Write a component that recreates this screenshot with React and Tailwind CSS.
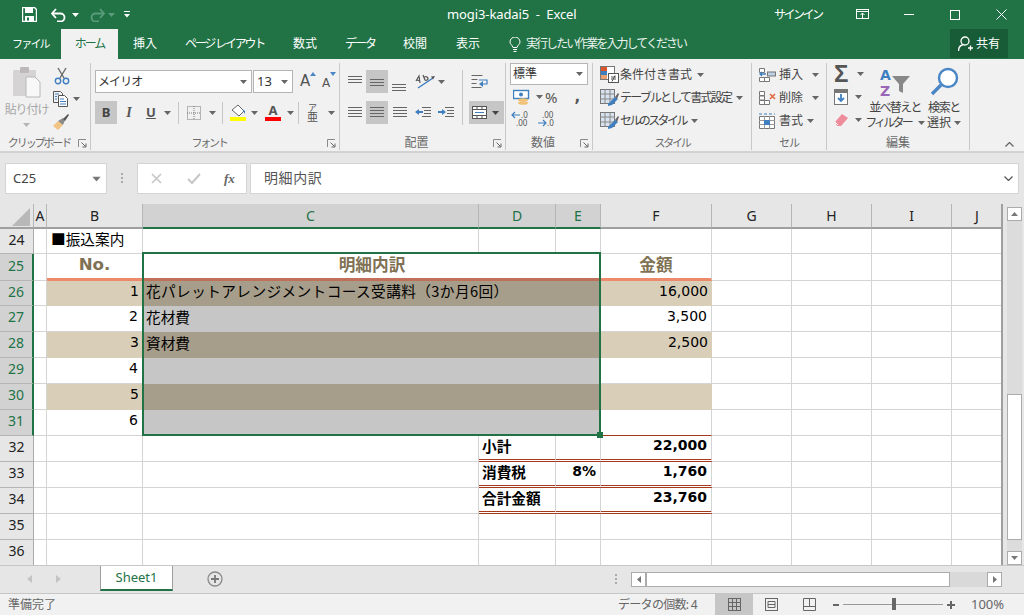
import React from "react";

const Caret = ({ c = "#666", className = "" }) => (
  <svg width="7" height="4" viewBox="0 0 7 4" className={"shrink-0 " + className}><path d="M0 0h7L3.5 4z" fill={c} /></svg>
);
const Launcher = () => (
  <svg width="9" height="9" viewBox="0 0 9 9" className="shrink-0"><path d="M.5 8V.5H8" fill="none" stroke="#8a8a8a" /><path d="M3.5 3.5l4 4M8 4.5V8H4.5" fill="none" stroke="#666" /></svg>
);

function Group({ className, label, labelCls = "text-[12px]", launcher, children }) {
  return (
    <div className={"flex flex-col border-r border-[#c8c8c8] shrink-0 " + className}>
      <div className="h-[72px]">{children}</div>
      <div className="h-[15px] flex items-end relative pb-[1px]">
        <span className={"flex-1 text-center leading-[13px] text-[#6a6a6a] whitespace-nowrap " + labelCls}>{label}</span>
        {launcher && <span className="mr-[3px] mb-[1px] flex"><Launcher /></span>}
      </div>
    </div>
  );
}

const lines = (ys, x1, x2, c = "#666") => ys.map((y, i) => <path key={i} d={`M${x1} ${y}H${x2}`} stroke={c} />);
const AlignV = ({ y }) => <svg width="14" height="14" viewBox="0 0 14 14">{lines([y, y + 3, y + 6], 0, 14)}</svg>;
const AlignH = ({ a, b }) => <svg width="15" height="13" viewBox="0 0 15 13">{lines([1.5, 4.5, 7.5, 10.5], a, b)}</svg>;

const SmallLabel = ({ children, className = "" }) => <span className={"text-[12px] leading-[16px] text-[#444] whitespace-nowrap " + className}>{children}</span>;

const StyleRow = ({ icon, label, cls }) => (
  <div className="flex items-center h-[23px]">
    <span className="w-[20px] h-[18px] flex shrink-0">{icon}</span>
    <SmallLabel className={cls}>{label}</SmallLabel>
    <Caret className="ml-[5px]" />
  </div>
);

const TableIcon = () => (
  <svg width="20" height="18" viewBox="0 0 20 18">
    <rect x=".5" y=".5" width="14" height="14" fill="#d8e2ee" stroke="#777" />
    <path d="M5 .5v14M10 .5v14M.5 5h14M.5 10h14" stroke="#888" />
    <path d="M8 15l7-7 3 2-6 6-4 1z" fill="#3f7fbf" />
    <path d="M15 8l3-4 1 1-2 5z" fill="#666" />
  </svg>
);

function Ribbon() {
  return (
    <div className="h-[94px] bg-[#f1f1f1] border-b-[2px] border-[#d2d2d2] flex pt-[4px] pb-[1px] shrink-0">
      <Group className="w-[91px]" label="クリップボード" labelCls="text-[11px] tracking-[-2.1px]" launcher>
        <div className="flex">
          <div className="w-[53px] flex flex-col items-center pt-[4px]">
            <svg width="29" height="31" viewBox="0 0 29 31">
              <rect x="1" y="3" width="23" height="26" rx="1" fill="#d6d3d5" />
              <rect x="8" y="0" width="9" height="6" rx="1" fill="#bdb9bb" />
              <path d="M14 10h9l5 5v15H14z" fill="#f8f8f8" stroke="#b8b8b8" />
            </svg>
            <span className="text-[12px] leading-[14px] mt-[5px] text-[#a8a8a8] tracking-[-1.1px] whitespace-nowrap">貼り付け</span>
            <Caret c="#b5b5b5" className="mt-[6px]" />
          </div>
          <div className="flex flex-col pt-[4px] gap-[6px]">
            <svg width="16" height="18" viewBox="0 0 16 18" className="ml-[1px]">
              <path d="M4 1l6 10M12 1L6 11" stroke="#6a6a6a" strokeWidth="1.4" fill="none" />
              <circle cx="4" cy="14" r="2.7" fill="none" stroke="#3f7fbf" strokeWidth="1.4" />
              <circle cx="12" cy="14" r="2.7" fill="none" stroke="#3f7fbf" strokeWidth="1.4" />
            </svg>
            <div className="flex items-center">
              <svg width="16" height="16" viewBox="0 0 16 16">
                <path d="M.5.5h7l2 2V4M.5.5v11H5" fill="none" stroke="#555" />
                <path d="M5.500 4.500h6l3 3v8h-9z" fill="#fff" stroke="#555" />
                <path d="M2 3h4M2 5.500h2M2 8h2M7 8h4M7 10.500h6M7 13h6" stroke="#3f7fbf" />
              </svg>
              <Caret className="ml-[4px]" />
            </div>
            <svg width="17" height="17" viewBox="0 0 17 17">
              <path d="M0 13l5-5 5 4-5 5z" fill="#f1c486" />
              <path d="M5 8l5-3 2 2-2 5z" fill="#8a8a8a" />
              <path d="M10 6l5-5 1 1-4 6z" fill="#555" />
            </svg>
          </div>
        </div>
      </Group>

      <Group className="w-[249px]" label="フォント" labelCls="text-[11px] tracking-[-2.2px]" launcher>
        <div className="pl-[4px] pt-[7px]">
          <div className="flex items-center h-[23px]">
            <div className="w-[157px] h-[23px] bg-white border border-[#b5b5b5] flex items-center pl-[2px] pr-[4px] justify-between">
              <span className="text-[12px] text-[#333] tracking-[-0.9px]">メイリオ</span><Caret />
            </div>
            <div className="w-[40px] h-[23px] bg-white border border-[#b5b5b5] flex items-center pl-[3px] pr-[4px] justify-between ml-[1px]">
              <span className="text-[13px] text-[#333]">13</span><Caret />
            </div>
            <span className="ml-[7px] w-[21px] text-[15px] text-[#555] font-['DejaVu_Sans',sans-serif] relative leading-none">A<svg width="6" height="4" viewBox="0 0 6 4" className="absolute left-[10px] -top-[2px]"><path d="M3 0l3 4H0z" fill="#4a86c5" /></svg></span>
            <span className="ml-[1px] text-[12px] text-[#555] font-['DejaVu_Sans',sans-serif] relative leading-none mt-[2px]">A<svg width="6" height="4" viewBox="0 0 6 4" className="absolute left-[8px] -top-[5px]"><path d="M0 0h6L3 4z" fill="#4a86c5" /></svg></span>
          </div>
          <div className="flex items-center h-[23px] mt-[8px]">
            <span className="w-[22px] h-[23px] bg-[#c6c6c6] flex items-center justify-center text-[13px] font-bold text-[#444]">B</span>
            <span className="w-[22px] text-center text-[14px] italic font-bold font-['Liberation_Serif',serif] text-[#555] ml-[1px]">I</span>
            <span className="w-[20px] text-center text-[13px] font-bold text-[#555] underline ml-[1px]">U</span>
            <Caret className="ml-[3px]" />
            <span className="w-px h-[22px] bg-[#c6c6c6] ml-[7px]" />
            <svg width="14" height="14" viewBox="0 0 14 14" className="ml-[8px]"><rect x=".5" y=".5" width="13" height="13" fill="none" stroke="#777" strokeDasharray="1 1" /><path d="M7 0v14M0 7h14" stroke="#777" strokeDasharray="1 1" /></svg>
            <Caret className="ml-[8px]" />
            <span className="w-px h-[22px] bg-[#c6c6c6] ml-[6px]" />
            <div className="ml-[7px] w-[16px] flex flex-col items-center">
              <svg width="16" height="13" viewBox="0 0 16 13"><path d="M2 6l6-5 6 6-5 5z" fill="#fff" stroke="#666" /><path d="M12 5l3 2v3z" fill="#3f7fbf" /></svg>
              <span className="w-[16px] h-[4px] bg-[#ffff00]" />
            </div>
            <Caret className="ml-[5px]" />
            <div className="ml-[7px] w-[16px] flex flex-col items-center leading-none">
              <span className="text-[13px] h-[13px] font-bold text-[#555] leading-[13px]">A</span>
              <span className="w-[16px] h-[4px] bg-[#ff0000]" />
            </div>
            <Caret className="ml-[6px]" />
            <span className="w-px h-[22px] bg-[#c6c6c6] ml-[4px]" />
            <svg width="12" height="19" viewBox="0 0 12 19" className="ml-[8px] shrink-0">
              <text x="1" y="8" fontSize="9" fill="#555" fontFamily="Noto Sans CJK JP">ア</text>
              <text x="0" y="18" fontSize="11" fill="#555" fontFamily="Noto Sans CJK JP">亜</text>
            </svg>
            <Caret className="ml-[9px]" />
          </div>
        </div>
      </Group>

      <Group className="w-[166px]" label="配置" launcher>
        <div className="flex pl-[8px] pt-[7px]">
          <div className="w-[113px]">
            <div className="flex items-center h-[23px]">
              <span className="w-[18px] flex"><AlignV y={1.5} /></span>
              <span className="w-[22px] h-[23px] bg-[#c6c6c6] flex items-center justify-center"><AlignV y={4.5} /></span>
              <span className="w-[22px] flex justify-center pt-[6px]"><AlignV y={6.5} /></span>
              <svg width="21" height="17" viewBox="0 0 21 17" className="ml-[5px]"><path d="M1 8l3-5 1 7M2 7l3 1" fill="none" stroke="#555" strokeWidth="1.2" /><path d="M8 2l2 5a2 2 0 003-2l-1-1a2 2 0 00-3 1" fill="none" stroke="#555" strokeWidth="1.2" /><path d="M3 15L18 5" stroke="#3f7fbf" strokeWidth="1.5" /><path d="M20 3l-4 .5 2 3z" fill="#555" /></svg>
              <Caret className="ml-[2px]" />
            </div>
            <div className="flex items-center h-[23px] mt-[8px]">
              <span className="w-[18px] flex"><AlignH a={0} b={14} /></span>
              <span className="w-[22px] h-[23px] bg-[#c6c6c6] flex items-center justify-center"><AlignH a={0} b={14} /></span>
              <span className="w-[22px] flex justify-center"><AlignH a={1} b={15} /></span>
              <svg width="17" height="13" viewBox="0 0 17 13" className="ml-[5px]"><path d="M7 1.500h9M9 4.500h7M9 7.500h7M7 10.500h9" stroke="#666" /><path d="M0 6l4-3v2h4v2H4v2z" fill="#3f7fbf" /></svg>
              <svg width="17" height="13" viewBox="0 0 17 13" className="ml-[6px]"><path d="M7 1.500h9M9 4.500h7M9 7.500h7M7 10.500h9" stroke="#666" /><path d="M8 6L4 3v2H0v2h4v2z" fill="#3f7fbf" /></svg>
            </div>
          </div>
          <div className="border-l border-[#c6c6c6] h-[55px] pl-[6px] ml-[1px]">
            <div className="h-[23px] flex items-center pl-[2px]">
              <svg width="18" height="16" viewBox="0 0 18 16"><path d="M.5 1.500h11M.5 5.500h6M.5 9.500h5M.5 13.500h10" stroke="#666" /><path d="M8 6h8v4h-6" fill="none" stroke="#3f7fbf" strokeWidth="1.2" /><path d="M12 7l-4 3 4 3z" fill="#3f7fbf" /></svg>
            </div>
            <div className="w-[35px] h-[23px] bg-[#c6c6c6] flex items-center pl-[3px] mt-[8px]">
              <svg width="15" height="13" viewBox="0 0 15 13"><rect x=".5" y=".5" width="14" height="12" fill="#fff" stroke="#555" /><path d="M0 3.500h15M0 9.500h15M5 0v3M10 0v3M5 10v3M10 10v3" stroke="#555" /><path d="M3 6.500h9" stroke="#3f7fbf" /></svg>
              <Caret c="#444" className="ml-[5px]" />
            </div>
          </div>
        </div>
      </Group>

      <Group className="w-[87px]" label="数値" launcher>
        <div className="pl-[4px]">
          <div className="w-[78px] h-[22px] bg-white border border-[#b5b5b5] flex items-center justify-between pl-[2px] pr-[4px]">
            <span className="text-[12px] text-[#333]">標準</span><Caret />
          </div>
          <div className="flex items-center h-[20px] mt-[2px] pl-[3px]">
            <svg width="17" height="17" viewBox="0 0 17 17" className="shrink-0"><rect x=".5" y="1.500" width="15" height="8" fill="#fff" stroke="#3f7fbf" strokeWidth="1.4" /><circle cx="8" cy="5.500" r="2" fill="#3f7fbf" /><ellipse cx="10" cy="11" rx="5" ry="1.800" fill="#f0c27a" /><ellipse cx="10" cy="14" rx="5" ry="1.800" fill="#f0c27a" /></svg>
            <Caret className="ml-[6px]" />
            <span className="ml-[2px] text-[15px] leading-none text-[#555]">%</span>
            <span className="ml-[17px] text-[15px] leading-none font-bold text-[#555] font-['DejaVu_Sans',sans-serif]">,</span>
          </div>
          <div className="flex items-center h-[20px] mt-[1px] pl-[1px] gap-[6px]">
            <svg width="20" height="17" viewBox="0 0 20 17" className="shrink-0">
              <path d="M1 5h8M4 2L1 5l3 3" fill="none" stroke="#3f7fbf" strokeWidth="1.2" />
              <text x="10" y="8" fontSize="8" fill="#555" fontFamily="Noto Sans">.0</text>
              <text x="5" y="16" fontSize="8" fill="#555" fontFamily="Noto Sans">.00</text>
            </svg>
            <svg width="20" height="17" viewBox="0 0 20 17" className="shrink-0">
              <text x="5" y="8" fontSize="8" fill="#555" fontFamily="Noto Sans">.00</text>
              <path d="M1 13h8M6 10l3 3-3 3" fill="none" stroke="#3f7fbf" strokeWidth="1.2" />
              <text x="10" y="16" fontSize="8" fill="#555" fontFamily="Noto Sans">.0</text>
            </svg>
          </div>
        </div>
      </Group>

      <Group className="w-[159px]" label="スタイル" labelCls="text-[11px] tracking-[-2.200px]">
        <div className="pl-[7px] flex flex-col">
          <StyleRow label="条件付き書式" cls="" icon={
            <svg width="20" height="18" viewBox="0 0 20 18"><rect x=".5" y=".5" width="14" height="13" fill="#fff" stroke="#777" /><rect x="1" y="1" width="6" height="4" fill="#d9552b" /><rect x="1" y="5" width="6" height="4" fill="#3f7fbf" /><rect x="1" y="9" width="6" height="4" fill="#e9a06f" /><rect x="8.500" y="7.500" width="10" height="9" fill="#fff" stroke="#555" /><path d="M11 11h5M11 13h5M15 9.500l-3 6" stroke="#555" /></svg>
          } />
          <StyleRow label="テーブルとして書式設定" cls="tracking-[-1.800px]" icon={<TableIcon />} />
          <StyleRow label="セルのスタイル" cls="tracking-[-2.600px]" icon={<TableIcon />} />
        </div>
      </Group>

      <Group className="w-[75px]" label="セル" labelCls="text-[11px] tracking-[-1px]">
        <div className="pl-[7px] flex flex-col">
          {[
            ["挿入", <svg key="a" width="17" height="16" viewBox="0 0 17 16"><path d="M.5 1.500h5v4h-5zM.5 10.500h5v4h-5zM5.500 10.500h5v4h-5z" fill="#fff" stroke="#777" /><rect x="8.500" y="5" width="8" height="4" fill="#bcd0e6" stroke="#777" /><path d="M1 7h6M3 5L1 7l2 2" stroke="#3f7fbf" fill="none" strokeWidth="1.3" /></svg>],
            ["削除", <svg key="b" width="17" height="16" viewBox="0 0 17 16"><path d="M.5 1.500h5v4h-5zM.5 10.500h5v4h-5zM5.500 10.500h5v4h-5zM.5 6h5v4h-5z" fill="#fff" stroke="#777" /><path d="M11 4l5 5M16 4l-5 5" stroke="#e0683c" strokeWidth="1.500" /></svg>],
            ["書式", <svg key="c" width="17" height="16" viewBox="0 0 17 16"><path d="M.5 3.500h15v12H.5z" fill="#fff" stroke="#777" /><path d="M5.500 3v13M10.500 3v13M0 7.500h16M0 11.500h16" stroke="#999" /><rect x="5" y="7" width="6" height="5" fill="#3f7fbf" /><path d="M0 1h16" stroke="#3f7fbf" strokeDasharray="3 2" /></svg>],
          ].map(([t, ic], i) => (
            <div key={t} className="flex items-center h-[23px]">
              {ic}
              <SmallLabel className="ml-[3px]">{t}</SmallLabel>
              <Caret className={i === 2 ? "ml-[4px]" : "ml-[9px]"} />
            </div>
          ))}
        </div>
      </Group>

      <Group className="w-[143px]" label="編集">
        <div className="flex pl-[7px]">
          <div className="w-[38px] flex flex-col">
            <div className="flex items-center h-[22px]"><span className="w-[16px] text-[24px] leading-none font-bold text-[#555] font-['Liberation_Sans',sans-serif]">Σ</span><Caret className="ml-[7px]" /></div>
            <div className="flex items-center h-[24px]">
              <svg width="15" height="16" viewBox="0 0 15 16"><rect x=".5" y=".5" width="13" height="15" fill="#fff" stroke="#777" /><rect x="1" y="1" width="12" height="3" fill="#777" /><path d="M7 5v7M4 9l3 3 3-3" stroke="#3f7fbf" strokeWidth="1.800" fill="none" /></svg>
              <Caret className="ml-[6px]" />
            </div>
            <div className="flex items-center h-[22px]">
              <svg width="15" height="14" viewBox="0 0 15 14"><path d="M1 9l7-8 6 4-7 8H3z" fill="#ee8c9c" /><path d="M1 9l3 3" stroke="#fff" /></svg>
              <Caret className="ml-[6px]" />
            </div>
          </div>
          <div className="flex flex-col items-center w-[48px] shrink-0">
            <svg width="31" height="30" viewBox="0 0 31 30" className="mt-[4px] shrink-0">
              <text x="0" y="13" fontSize="14" fontWeight="700" fill="#3f7fbf" fontFamily="DejaVu Sans">A</text>
              <text x="0" y="29" fontSize="14" fontWeight="700" fill="#9a66b8" fontFamily="DejaVu Sans">Z</text>
              <path d="M12 9h18l-7 8v9l-4-2v-7z" fill="#888" />
            </svg>
            <span className="text-[12px] leading-[15px] mt-[3px] text-[#444] whitespace-nowrap tracking-[-1.700px]">並べ替えと</span>
            <span className="flex items-center text-[12px] leading-[15px] text-[#444] whitespace-nowrap tracking-[-2.800px]">フィルター<Caret className="ml-[7px]" /></span>
          </div>
          <div className="flex flex-col items-center w-[50px] shrink-0">
            <svg width="29" height="29" viewBox="0 0 29 29" className="mt-[4px] shrink-0">
              <circle cx="18" cy="11" r="9" fill="#fff" stroke="#4a86c5" strokeWidth="2.400" />
              <path d="M11 18L2 27" stroke="#4a86c5" strokeWidth="3.400" />
            </svg>
            <span className="text-[12px] leading-[15px] mt-[4px] text-[#444] whitespace-nowrap tracking-[-1.300px]">検索と</span>
            <span className="flex items-center text-[12px] leading-[15px] text-[#444] whitespace-nowrap">選択<Caret className="ml-[3px]" /></span>
          </div>
        </div>
      </Group>

      <div className="flex-1 flex items-end justify-end pr-[10px] pb-[3px]">
        <svg width="9" height="5" viewBox="0 0 9 5"><path d="M.5 4.500l4-4 4 4" fill="none" stroke="#666" strokeWidth="1.300" /></svg>
      </div>
    </div>
  );
}

function TitleBar() {
  return (
    <div className="h-[29px] bg-[#217346] flex items-center relative text-white shrink-0">
      <svg width="15" height="15" viewBox="0 0 15 15" className="ml-[22px] shrink-0"><path d="M.5.5h12l2 2v12H.5z" fill="none" stroke="#fff" strokeWidth="1.400" /><rect x="3" y="1" width="8" height="5" fill="#fff" /><rect x="3" y="9" width="9" height="5.500" fill="#fff" /><rect x="5" y="10.500" width="2" height="3" fill="#217346" /></svg>
      <svg width="15" height="14" viewBox="0 0 15 14" className="ml-[14px] shrink-0"><path d="M1 5.500h8.500a4 4 0 010 8H6" fill="none" stroke="#fff" strokeWidth="1.800" /><path d="M5 1L1 5.500 5 10" fill="none" stroke="#fff" strokeWidth="1.800" /></svg>
      <Caret c="#fff" className="ml-[6px]" />
      <svg width="15" height="14" viewBox="0 0 15 14" className="ml-[11px] shrink-0"><path d="M14 5.500H5.500a4 4 0 000 8H9" fill="none" stroke="#5a9c7b" strokeWidth="1.800" /><path d="M10 1l4 4.500L10 10" fill="none" stroke="#5a9c7b" strokeWidth="1.800" /></svg>
      <Caret c="#5a9c7b" className="ml-[3px]" />
      <svg width="6" height="7" viewBox="0 0 6 7" className="ml-[9px] shrink-0"><path d="M0 .5h6" stroke="#fff" /><path d="M0 3h6L3 6.500z" fill="#fff" /></svg>
      <div className="ml-[317px] w-[129px] shrink-0 text-[13px] whitespace-pre leading-none tracking-[-0.1px]">mogi3-kadai5  -  Excel</div>
      <span className="ml-[198px] w-[46px] shrink-0 text-[12px] tracking-[-2.500px] whitespace-nowrap">サインイン</span>
      <svg width="13" height="11" viewBox="0 0 13 11" className="ml-[36px] shrink-0"><rect x=".5" y=".5" width="12" height="9" fill="none" stroke="#fff" /><path d="M0 2.500h13M6.500 9V4M4.500 6l2-2 2 2" stroke="#fff" fill="none" /></svg>
      <span className="w-[10px] h-px bg-white ml-[35px] shrink-0" />
      <span className="w-[10px] h-[10px] border border-white ml-[36px] shrink-0" />
      <svg width="11" height="11" viewBox="0 0 11 11" className="ml-[36px] shrink-0"><path d="M.5.5l10 10M10.500.5l-10 10" stroke="#fff" /></svg>
    </div>
  );
}

function Tabs() {
  return (
    <div className="h-[30px] bg-[#217346] flex items-center text-white text-[12px] shrink-0 whitespace-nowrap">
      <span className="ml-[12px] text-[11px] tracking-[-1.800px] w-[34px] shrink-0">ファイル</span>
      <span className="ml-[15px] w-[57px] shrink-0 h-[30px] bg-[#f1f1f1] text-[#217346] flex items-center justify-center tracking-[-2px]">ホーム</span>
      <span className="ml-[15px] w-[24px] shrink-0">挿入</span>
      <span className="ml-[28px] w-[80px] shrink-0 tracking-[-2.200px]">ページ レイアウト</span>
      <span className="ml-[28px] w-[24px] shrink-0">数式</span>
      <span className="ml-[28px] w-[30px] shrink-0 tracking-[-2px]">データ</span>
      <span className="ml-[28px] w-[24px] shrink-0">校閲</span>
      <span className="ml-[29px] w-[24px] shrink-0">表示</span>
      <svg width="12" height="15" viewBox="0 0 12 15" className="ml-[29px] shrink-0"><path d="M4 10.500C3.500 8 1 7.500 1 5a5 5 0 0110 0c0 2.500-2.500 3-3 5.500z" fill="none" stroke="#fff" /><path d="M4 12.500h4M4.500 14.500h3" stroke="#fff" /></svg>
      <span className="ml-[5px] tracking-[-1.950px] w-[161px] shrink-0 text-[#e9f2ed]">実行したい作業を入力してください</span>
      <div className="ml-[263px] w-[58px] shrink-0 h-[29px] mt-[-1px] bg-[#185c37] flex items-center pl-[8px] gap-[3px]">
        <svg width="15" height="16" viewBox="0 0 15 16"><circle cx="7" cy="5" r="4" fill="none" stroke="#fff" strokeWidth="1.300" /><path d="M.5 15c0-4 2.500-6 5-6.500M10 12h5M12.500 9.500v5" fill="none" stroke="#fff" strokeWidth="1.300" /></svg>
        <span className="text-[12px]">共有</span>
      </div>
    </div>
  );
}

function FormulaBar() {
  return (
    <div className="h-[51px] bg-[#e6e6e6] flex items-start pt-[10px] shrink-0">
      <div className="ml-[5px] w-[102px] h-[31px] bg-white border border-[#d4d4d4] flex items-center justify-between pl-[7px] pr-[6px]">
        <span className="text-[13px] text-[#444]">C25</span><Caret c="#777" className="scale-125" />
      </div>
      <div className="ml-[14px] mt-[7px] h-[16px] flex flex-col gap-[2px] justify-center"><span className="w-[2px] h-[2px] bg-[#aaa]" /><span className="w-[2px] h-[2px] bg-[#aaa]" /><span className="w-[2px] h-[2px] bg-[#aaa]" /></div>
      <div className="ml-[14px] w-[110px] h-[31px] bg-white border border-[#d4d4d4] flex items-center">
        <svg width="11" height="11" viewBox="0 0 11 11" className="ml-[13px]"><path d="M1 1l9 9M10 1l-9 9" stroke="#c6c6c6" strokeWidth="1.600" /></svg>
        <svg width="14" height="11" viewBox="0 0 14 11" className="ml-[25px]"><path d="M1 6l4 4 8-9" fill="none" stroke="#c6c6c6" strokeWidth="2" /></svg>
        <span className="ml-[23px] text-[13px] italic font-bold font-['Liberation_Serif',serif] text-[#666] leading-none">fx</span>
      </div>
      <div className="ml-[3px] w-[769px] h-[31px] bg-white border border-[#d4d4d4] flex items-center justify-between pl-[13px] pr-[5px]">
        <span className="text-[14px] text-[#555] tracking-[0.6px] pb-[3px]">明細内訳</span>
        <svg width="9" height="5" viewBox="0 0 9 5"><path d="M.5.5l4 4 4-4" fill="none" stroke="#555" strokeWidth="1.200" /></svg>
      </div>
    </div>
  );
}

const COLW = { A: "w-[13px]", B: "w-[96px]", C: "w-[336px]", D: "w-[77px]", E: "w-[45px]", F: "w-[111px]", G: "w-[80px]", H: "w-[80px]", I: "w-[80px]", J: "w-[51px]" };
const GRID = "border-r border-b border-[#d4d4d4]";
const JP = "font-['Noto_Sans_CJK_JP',sans-serif] text-[14.67px]";
const NUM = "font-['DejaVu_Sans',sans-serif] text-[14px]";

const Cell = ({ w, className = GRID, children }) => (
  <div className={`${w} shrink-0 h-full flex items-center whitespace-nowrap text-black ${className}`}>{children}</div>
);

function RowHead({ n, sel }) {
  return (
    <div className={`w-[34px] shrink-0 h-full flex items-center justify-center pb-[4px] text-[14px] border-b ${sel ? "bg-[#d2d2d2] text-[#217346] border-r-2 border-r-[#217346] border-b-[#b5b5b5]" : "bg-[#e6e6e6] text-[#222] border-r border-r-[#ababab] border-b-[#b5b5b5]"}`}>{n}</div>
  );
}

const Blank = () => (<><Cell w={COLW.G} /><Cell w={COLW.H} /><Cell w={COLW.I} /><Cell w={COLW.J} /></>);

function HeaderRow() {
  const H = ({ c, sel, w }) => (
    <div className={`${w} shrink-0 h-full flex items-center justify-center text-[14px] border-r border-r-[#b5b5b5] border-b-2 ${sel ? "bg-[#d2d2d2] text-[#217346] border-b-[#217346]" : "bg-[#e6e6e6] text-[#222] border-b-[#9f9f9f]"}`}>{c}</div>
  );
  return (
    <div className="flex h-[25px] w-[1003px]">
      <div className="w-[34px] shrink-0 bg-[#e6e6e6] border-b-2 border-b-[#9f9f9f] border-r border-r-[#b5b5b5] flex items-end justify-end pr-[3px] pb-[1px]">
        <svg width="18" height="18" viewBox="0 0 18 18"><path d="M18 0v18H0z" fill="#b8b8b8" /></svg>
      </div>
      <H c="A" w={COLW.A} />
      <H c="B" w={COLW.B} />
      <H c="C" w={COLW.C} sel />
      <H c="D" w={COLW.D} sel />
      <H c="E" w={COLW.E} sel />
      <H c="F" w={COLW.F} />
      <H c="G" w={COLW.G} />
      <H c="H" w={COLW.H} />
      <H c="I" w={COLW.I} />
      <H c="J" w={COLW.J} />
    </div>
  );
}

const SEL_W = "w-[458px]";
function DataRow({ n, no, text, amount, tan, wide, h = "h-[26px]" }) {
  const tanCls = "bg-[#d9cfb8]";
  const selCls = tan ? "bg-[#a69d8a]" : "bg-[#c6c6c6]";
  return (
    <div className={`flex shrink-0 ${h}`}>
      <RowHead n={n} sel />
      <Cell w={COLW.A} />
      <Cell w={COLW.B} className={`justify-end pr-[4px] pb-[5px] ${NUM} ${tan ? tanCls : GRID}`}>{no}</Cell>
      <Cell w={SEL_W} className={`pl-[3px] pb-[5px] ${JP} ${selCls} ${wide ? "tracking-[0.4px]" : ""}`}>{text}</Cell>
      <Cell w={COLW.F} className={`justify-end pr-[4px] pb-[5px] ${NUM} ${tan ? tanCls : (n === 31 ? "border-r border-r-[#d4d4d4] border-b border-b-[#a5391c]" : GRID)}`}>{amount}</Cell>
      <Blank />
    </div>
  );
}

function PlainRow({ n, h = "h-[26px]", children }) {
  return (
    <div className={`flex ${h}`}>
      <RowHead n={n} />
      <Cell w={COLW.A} />
      {children}
      <Blank />
    </div>
  );
}

const dbl = "border-r border-r-[#d4d4d4] border-b-[3px] border-double border-b-[#a5391c]";
const Bold = "font-['DejaVu_Sans',sans-serif] text-[14px] font-bold pb-[4px]";
const BoldJP = "font-['Noto_Sans_CJK_JP',sans-serif] text-[14.67px] font-bold pb-[4px]";
const HeadJP = "font-['Noto_Sans_CJK_JP',sans-serif] text-[16.67px] font-bold pb-[3px]";
const HeadNo = "font-['DejaVu_Sans',sans-serif] text-[16.67px] font-bold pb-[3px]";

function Sheet() {
  return (
    <div className="h-[361px] flex relative overflow-hidden bg-white shrink-0">
      <div className="w-[1001px] shrink-0 border-r-2 border-[#9f9f9f] overflow-hidden relative box-content">
        <HeaderRow />
        <PlainRow n={24} h="h-[25px]">
          <Cell w={COLW.B} className={`${GRID} pl-[4px] pb-[4px] ${JP}`}>■振込案内</Cell>
          <Cell w={COLW.C} /><Cell w={COLW.D} /><Cell w={COLW.E} /><Cell w={COLW.F} />
        </PlainRow>
        <div className="flex h-[27px]">
          <RowHead n={25} sel />
          <Cell w={COLW.A} />
          <Cell w={COLW.B} className={`justify-center border-r border-r-[#d4d4d4] border-b-[3px] border-b-[#ee8a6c] ${HeadNo}`}><span className="text-[#7f7254]">No.</span></Cell>
          <Cell w={SEL_W} className={`justify-center border-b-[3px] border-b-[#c06f59] ${HeadJP}`}><span className="text-[#7f7254]">明細内訳</span></Cell>
          <Cell w={COLW.F} className={`justify-center border-r border-r-[#d4d4d4] border-b-[3px] border-b-[#ee8a6c] ${HeadJP}`}><span className="text-[#7f7254]">金額</span></Cell>
          <Blank />
        </div>
        <DataRow n={26} no="1" tan wide h="h-[25px]" text="花パレットアレンジメントコース受講料（3か月6回）" amount="16,000" />
        <DataRow n={27} no="2" text="花材費" amount="3,500" />
        <DataRow n={28} no="3" tan text="資材費" amount="2,500" />
        <DataRow n={29} no="4" />
        <DataRow n={30} no="5" tan />
        <DataRow n={31} no="6" />
        <PlainRow n={32}>
          <Cell w={COLW.B} /><Cell w={COLW.C} />
          <Cell w={COLW.D} className={`${dbl} pl-[3px] ${BoldJP}`}>小計</Cell>
          <Cell w={COLW.E} className={dbl} />
          <Cell w={COLW.F} className={`${dbl} justify-end pr-[4px] ${Bold}`}>22,000</Cell>
        </PlainRow>
        <PlainRow n={33}>
          <Cell w={COLW.B} /><Cell w={COLW.C} />
          <Cell w={COLW.D} className={`${dbl} pl-[3px] ${BoldJP}`}>消費税</Cell>
          <Cell w={COLW.E} className={`${dbl} justify-end pr-[4px] ${Bold}`}>8%</Cell>
          <Cell w={COLW.F} className={`${dbl} justify-end pr-[4px] ${Bold}`}>1,760</Cell>
        </PlainRow>
        <PlainRow n={34}>
          <Cell w={COLW.B} /><Cell w={COLW.C} />
          <Cell w={COLW.D} className={`${dbl} pl-[3px] ${BoldJP}`}>合計金額</Cell>
          <Cell w={COLW.E} className={dbl} />
          <Cell w={COLW.F} className={`${dbl} justify-end pr-[4px] ${Bold}`}>23,760</Cell>
        </PlainRow>
        {[35, 36].map((n) => (
          <PlainRow key={n} n={n}>
            <Cell w={COLW.B} /><Cell w={COLW.C} /><Cell w={COLW.D} /><Cell w={COLW.E} /><Cell w={COLW.F} />
          </PlainRow>
        ))}
        <div className="absolute left-[142px] top-[48px] w-[459px] h-[184px] border-2 border-[#217346]">
          <div className="absolute -right-[4px] -bottom-[4px] w-[6px] h-[6px] bg-[#217346]" />
        </div>
      </div>
      <div className="flex-1 bg-[#e6e6e6] flex flex-col items-center pt-[3px] pl-[1px]">
        <div className="w-[15px] h-[14px] bg-white border border-[#ababab] flex items-center justify-center">
          <svg width="7" height="4" viewBox="0 0 7 4"><path d="M3.500 0L7 4H0z" fill="#777" /></svg>
        </div>
        <div className="w-[15px] flex-1 bg-[#dcdcdc] flex flex-col pt-[173px]">
          <div className="w-[15px] h-[146px] bg-white border border-[#ababab]" />
        </div>
        <div className="w-[15px] h-[14px] bg-white border border-[#ababab] flex items-center justify-center">
          <Caret c="#777" />
        </div>
      </div>
    </div>
  );
}

function SheetTabs() {
  return (
    <div className="h-[28px] bg-[#e6e6e6] border-t border-[#c6c6c6] flex shrink-0 items-start">
      <svg width="5" height="8" viewBox="0 0 5 8" className="ml-[27px] mt-[9px]"><path d="M5 0v8L0 4z" fill="#c4c4c4" /></svg>
      <svg width="5" height="8" viewBox="0 0 5 8" className="ml-[24px] mt-[9px]"><path d="M0 0v8l5-4z" fill="#c4c4c4" /></svg>
      <div className="ml-[39px] w-[73px] h-[25px] bg-white border-x border-[#9f9f9f] border-b-2 border-b-[#217346] flex items-center justify-center text-[13px] text-[#217346]">Sheet1</div>
      <svg width="16" height="16" viewBox="0 0 16 16" className="ml-[34px] mt-[5px]"><circle cx="8" cy="8" r="7" fill="none" stroke="#8a8a8a" strokeWidth="1.300" /><path d="M4 8h8M8 4v8" stroke="#777" strokeWidth="1.800" /></svg>
      <div className="ml-[392px] mt-[7px] h-[12px] flex flex-col gap-[2px] justify-center"><span className="w-[2px] h-[2px] bg-[#aaa]" /><span className="w-[2px] h-[2px] bg-[#aaa]" /><span className="w-[2px] h-[2px] bg-[#aaa]" /></div>
      <div className="ml-[14px] mt-[6px] w-[371px] h-[15px] flex bg-[#d9d9d9]">
        <div className="w-[15px] h-[15px] bg-white border border-[#ababab] flex items-center justify-center"><svg width="4" height="7" viewBox="0 0 4 7"><path d="M4 0v7L0 3.500z" fill="#777" /></svg></div>
        <div className="w-[304px] h-[15px] bg-white border border-[#ababab]" />
        <div className="flex-1" />
        <div className="w-[15px] h-[15px] bg-white border border-[#ababab] flex items-center justify-center"><svg width="4" height="7" viewBox="0 0 4 7"><path d="M0 0v7l4-3.500z" fill="#777" /></svg></div>
      </div>
    </div>
  );
}

function StatusBar() {
  return (
    <div className="h-[22px] bg-[#f1f1f1] border-t border-[#c6c6c6] flex items-center shrink-0 text-[12px] text-[#666] whitespace-nowrap">
      <span className="ml-[8px] w-[48px]">準備完了</span>
      <span className="ml-[562px] w-[80px] tracking-[-0.7px]">データの個数: 4</span>
      <div className="ml-[17px] w-[38px] h-[21px] bg-[#c6c6c6] flex items-center justify-center">
        <svg width="13" height="13" viewBox="0 0 13 13"><rect x=".5" y=".5" width="12" height="12" fill="none" stroke="#666" /><path d="M4.500 0v13M8.500 0v13M0 4.500h13M0 8.500h13" stroke="#666" /></svg>
      </div>
      <svg width="13" height="13" viewBox="0 0 13 13" className="ml-[12px]"><rect x=".5" y=".5" width="12" height="12" fill="none" stroke="#666" /><path d="M3 3.500h7v6H3zM3 6.500h7" fill="none" stroke="#666" /></svg>
      <svg width="13" height="13" viewBox="0 0 13 13" className="ml-[25px]"><path d="M.5.5h12v12H.5zM.5 8.500h12M6.500 0v8.500" fill="none" stroke="#666" /></svg>
      <span className="ml-[17px] w-[6px] h-[2px] bg-[#666]" />
      <div className="ml-[4px] w-[100px] h-px bg-[#999] relative">
        <span className="absolute left-[49px] -top-[6px] w-[4px] h-[12px] bg-[#666]" />
      </div>
      <svg width="8" height="8" viewBox="0 0 8 8" className="ml-[4px]"><path d="M0 4h8M4 0v8" stroke="#666" strokeWidth="2" /></svg>
      <span className="ml-[16px] text-[13px]">100%</span>
    </div>
  );
}

export default function App() {
  return (
    <div className="w-[1024px] h-[615px] overflow-hidden flex flex-col font-['Noto_Sans','Noto_Sans_CJK_JP',sans-serif]">
      <TitleBar />
      <Tabs />
      <Ribbon />
      <FormulaBar />
      <Sheet />
      <SheetTabs />
      <StatusBar />
    </div>
  );
}
